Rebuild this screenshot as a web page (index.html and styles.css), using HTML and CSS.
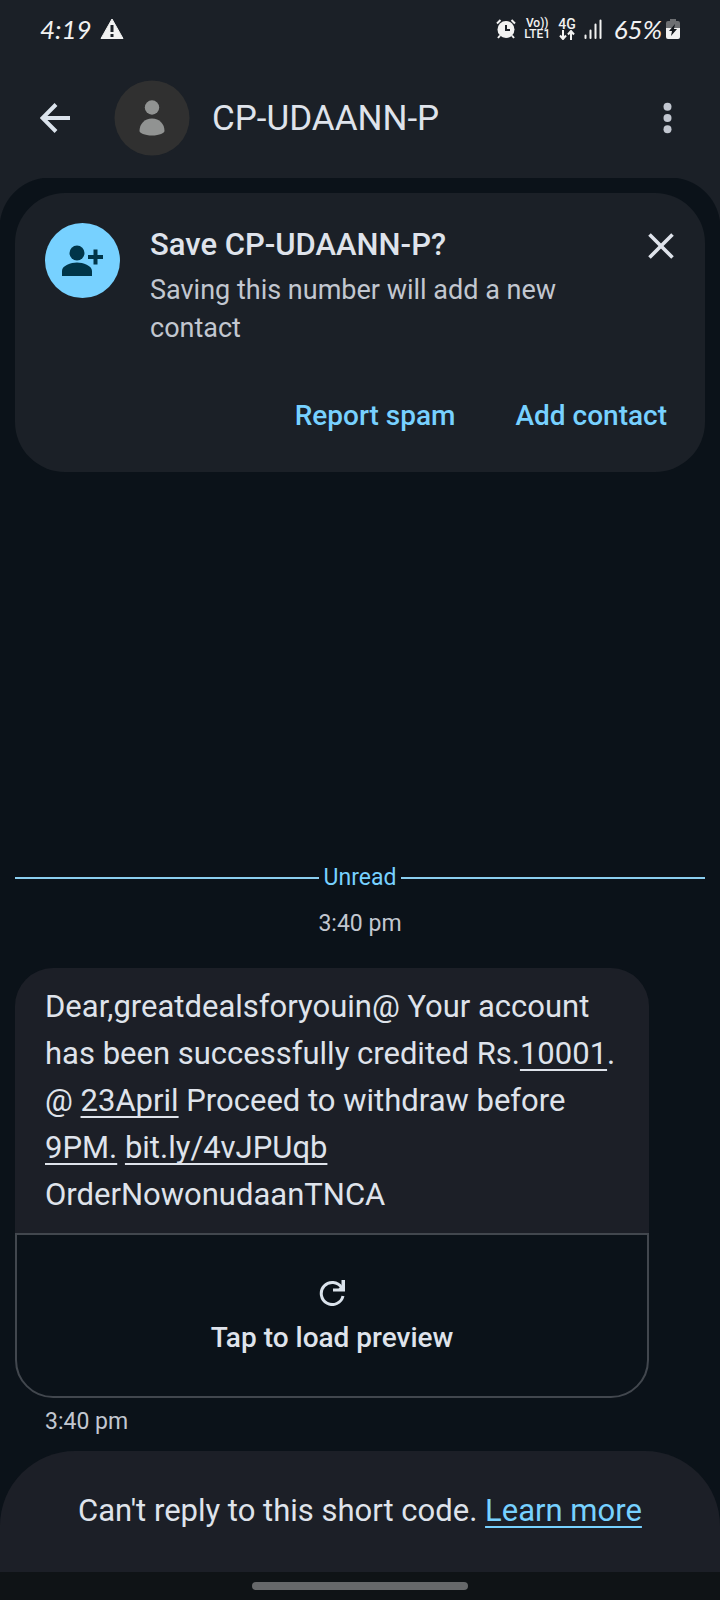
FILE: index.html
```html
<!DOCTYPE html>
<html lang="en">
<head>
  <meta charset="UTF-8">
  <meta name="viewport" content="width=device-width, initial-scale=1.0">
  <title>CP-UDAANN-P</title>
  <link rel="stylesheet" href="styles.css">
</head>
<body>
  <div class="status-bar">
    <span class="clock">4:19</span>
    <svg class="warning" width="24" height="22" viewBox="0 0 24 22">
      <path d="M12 1 23 20.500H1z" fill="#f2f2f2" stroke="#f2f2f2" stroke-linejoin="round"/>
      <path d="M10.500 7h3v7h-3zM10.500 16h3v3h-3z" fill="#1b2027"/>
    </svg>
    <div class="status-icons">
      <svg width="20" height="20" viewBox="0 0 20 20">
        <circle cx="10" cy="10.500" r="8.500" fill="#f2f2f2"/>
        <path d="M1 4.500 4.500 1M19 4.500 15.500 1M4 16.500l-2 2.500M16 16.500l2 2.500" stroke="#f2f2f2" stroke-width="2" fill="none"/>
        <path d="M10 6v5h4" stroke="#1b2027" stroke-width="2" fill="none"/>
      </svg>
      <span class="net"><span>Vo))</span><span>LTE1</span></span>
      <span class="net">
        <span class="net-type">4G</span>
        <svg width="16" height="10" viewBox="0 0 16 10">
          <path d="M4 0v9M1 5.500 4 9l3-3.500M12 10V1M9 4.500 12 1l3 3.500" stroke="#f2f2f2" stroke-width="2" fill="none"/>
        </svg>
      </span>
      <svg width="18" height="20" viewBox="0 0 18 20">
        <path d="M1.500 16.500V19M6.500 11.500V19M11.500 5.500V19M16.500 1.500V19" stroke="#f2f2f2" stroke-width="2" stroke-linecap="round"/>
      </svg>
      <span class="battery-level">65%</span>
      <svg class="battery" width="14" height="22" viewBox="0 0 14 22">
        <path d="M4 1h6v2h2a2 2 0 0 1 2 2v6H0V5a2 2 0 0 1 2-2h2z" fill="#6d6f72"/>
        <path d="M0 10h14v9a2 2 0 0 1-2 2H2a2 2 0 0 1-2-2z" fill="#f2f2f2"/>
        <path d="M9 6 3 13h3l-1 5 6-7H8z" fill="#14181d"/>
      </svg>
    </div>
  </div>

  <header class="app-bar">
    <button class="icon-button" aria-label="Back">
      <svg width="30" height="30" viewBox="0 0 30 30">
        <path d="M30 15H3M16 1.500 2.500 15 16 28.500" fill="none" stroke="#dbe3ec" stroke-width="4"/>
      </svg>
    </button>
    <svg class="avatar" width="76" height="76" viewBox="0 0 76 76">
      <circle cx="38" cy="38" r="37.500" fill="#303030"/>
      <circle cx="38" cy="27.500" r="7.200" fill="#919392"/>
      <path d="M25.500 51c0-7 5-12.500 12.500-12.500S50.500 44 50.500 51c0 2-5 4.500-12.500 4.500S25.500 53 25.500 51z" fill="#919392"/>
    </svg>
    <h1 class="name">CP-UDAANN-P</h1>
    <button class="icon-button" aria-label="More options">
      <svg width="15" height="32" viewBox="0 0 15 32">
        <g fill="#c2c7d0">
          <circle cx="7.500" cy="4.800" r="4"/>
          <circle cx="7.500" cy="16" r="4"/>
          <circle cx="7.500" cy="27.200" r="4"/>
        </g>
      </svg>
    </button>
  </header>

  <main class="conversation">
    <section class="save-card">
      <div class="save-info">
        <svg class="save-icon" width="75" height="75" viewBox="0 0 75 75">
          <circle cx="37.500" cy="37.500" r="37.500" fill="#77d1ff"/>
          <g fill="#003549">
            <circle cx="32" cy="30" r="7.500"/>
            <path d="M17 53v-5c0-5.500 9-8.500 15-8.500s15 3 15 8.500v5zM48.500 26.500h4V32h5.500v4h-5.500v5.500h-4V36H43v-4h5.500z"/>
          </g>
        </svg>
        <div class="save-text">
          <h2>Save CP-UDAANN-P?</h2>
          <p>Saving this number will add a new<br>contact</p>
        </div>
        <button class="icon-button close" aria-label="Close">
          <svg width="26" height="26" viewBox="0 0 26 26">
            <path d="M1.500 1.500l23 23M24.500 1.500l-23 23" stroke="#dfe3eb" stroke-width="3.600"/>
          </svg>
        </button>
      </div>
      <div class="save-actions">
        <button class="text-button">Report spam</button>
        <button class="text-button">Add contact</button>
      </div>
    </section>

    <div class="unread">Unread</div>
    <time class="time time-top">3:40 pm</time>

    <article class="message">
      <p class="message-text">Dear,greatdealsforyouin@ Your account<br>
        has been successfully credited Rs.<a href="#">10001</a>.<br>
        @ <a href="#">23April</a> Proceed to withdraw before<br>
        <a href="#">9PM.</a> <a href="#">bit.ly/4vJPUqb</a><br>
        OrderNowonudaanTNCA</p>
      <button class="preview">
        <svg width="26" height="26" viewBox="0 0 26 26">
          <path d="M24 16a11 11 0 1 1-1.500-8.500" fill="none" stroke="#dbe3ec" stroke-width="3"/>
          <path d="M22.500 0H26v11.500H14V8.500h5.500L22.500 6z" fill="#dbe3ec"/>
        </svg>
        <span>Tap to load preview</span>
      </button>
    </article>
    <time class="time time-sent">3:40 pm</time>
  </main>

  <footer class="reply-bar">
    <p>Can't reply to this short code. <a href="#">Learn more</a></p>
  </footer>
  <div class="nav-bar"><div class="nav-handle"></div></div>
</body>
</html>
```
FILE: styles.css
```css
* {
  box-sizing: border-box;
}

body {
  display: flex;
  flex-direction: column;
  min-height: 100vh;
  margin: 0;
  font-family: Roboto, "Liberation Sans", sans-serif;
  background: #0b1219;
  color: #dfe3eb;
}

h1, h2, p {
  margin: 0;
  font-weight: 400;
}

button {
  padding: 0;
  border: none;
  background: none;
  color: inherit;
  font: inherit;
  cursor: pointer;
}

svg {
  display: block;
  flex-shrink: 0;
}

.status-bar {
  display: flex;
  align-items: center;
  height: 58px;
  padding: 0 40px;
  background: #1b2027;
  color: #f2f2f2;
}

.clock,
.battery-level {
  font-family: Lato, sans-serif;
  font-size: 26px;
  font-style: italic;
}

.warning {
  margin-left: 8px;
}

.status-icons {
  display: flex;
  align-items: center;
  gap: 8px;
  margin-left: auto;
}

.net {
  display: flex;
  flex-direction: column;
  align-items: center;
  font-size: 12px;
  font-weight: 500;
  line-height: 11px;
}

.net-type {
  font-size: 14px;
}

.battery-level {
  margin-left: 4px;
}

.battery {
  margin-left: -4px;
}

.app-bar {
  display: flex;
  align-items: center;
  height: 120px;
  padding: 0 45px 0 40px;
  background: #1b2027;
}

.avatar {
  margin: 0 22px 0 44px;
}

.name {
  flex: 1;
  font-size: 35px;
}

.conversation {
  display: flex;
  flex: 1;
  flex-direction: column;
  padding: 15px 15px 14px;
  /* the rounded top corners show the app bar colour */
  background: radial-gradient(circle at 50px 50px, #0b1219 50px, #1b2027 51px) 0 0 / 50px 50px no-repeat,
    radial-gradient(circle at 0 50px, #0b1219 50px, #1b2027 51px) 100% 0 / 50px 50px no-repeat,
    #0b1219;
}

.save-card {
  padding: 30px;
  border-radius: 50px;
  background: #1b2027;
}

.save-info {
  display: flex;
  align-items: flex-start;
}

.save-text {
  flex: 1;
  padding-left: 30px;
}

.save-text h2 {
  margin-bottom: 4px;
  font-size: 31px;
  font-weight: 500;
  line-height: 44px;
}

.save-text p {
  color: #c2c7d0;
  font-size: 27px;
  line-height: 38px;
}

.close {
  margin: 10px 1px 0 0;
}

.save-actions {
  display: flex;
  justify-content: flex-end;
  gap: 60px;
  padding: 46px 8px 3px 0;
}

.text-button {
  color: #77d1ff;
  font-size: 28px;
  font-weight: 500;
  line-height: 46px;
}

.unread {
  display: flex;
  align-items: center;
  gap: 5px;
  margin-top: auto;
  color: #77d1ff;
  font-size: 23px;
  line-height: 30px;
}

.unread::before,
.unread::after {
  content: "";
  flex: 1;
  height: 2px;
  background: #8bceef;
}

.time {
  color: #c2c7d0;
  font-size: 23px;
  line-height: 30px;
}

.time-top {
  margin: 16px 0 29px;
  text-align: center;
}

.message {
  margin-right: 56px;
}

.message-text {
  padding: 15px 30px;
  border-radius: 38px 38px 0 0;
  background: #1c1f27;
  font-size: 31px;
  line-height: 47px;
}

.message-text a {
  color: inherit;
}

.message-text a,
.reply-bar a {
  text-decoration-thickness: 2px;
  text-decoration-skip-ink: none;
  text-underline-offset: 5px;
}

.preview {
  display: flex;
  flex-direction: column;
  align-items: center;
  gap: 13px;
  width: 100%;
  padding: 45px 30px 39px;
  border: 2px solid #42474e;
  border-radius: 0 0 38px 38px;
  font-size: 28px;
  font-weight: 500;
  line-height: 38px;
}

.time-sent {
  margin: 9px 30px 0;
}

.reply-bar {
  padding: 36px 30px 38px;
  border-radius: 75px 75px 0 0;
  background: #1c1f27;
  font-size: 31px;
  line-height: 47px;
  text-align: center;
}

.reply-bar a {
  color: #77d1ff;
}

.nav-bar {
  padding: 10px;
  background: #0f1316;
}

.nav-handle {
  width: 216px;
  height: 8px;
  margin: 0 auto;
  border-radius: 4px;
  background: #66686a;
}
```
